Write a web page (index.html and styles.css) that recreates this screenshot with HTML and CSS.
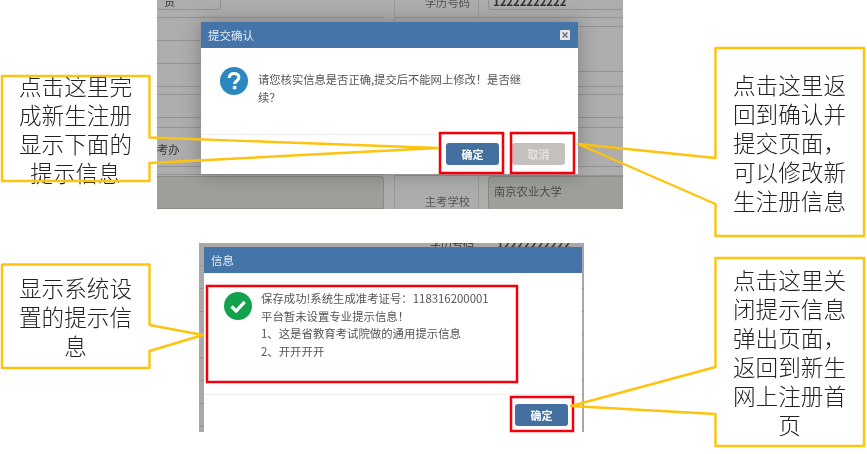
FILE: index.html
```html
<!DOCTYPE html>
<html lang="zh-CN">
<head>
<meta charset="utf-8">
<title>新生网上注册提示</title>
<link rel="stylesheet" href="styles.css">
</head>
<body>
<main class="canvas">

  <section class="shot shot-confirm">
    <div class="stack stack-left">
      <div class="row r18"><div class="field field-top-left">贡</div></div>
      <div class="row r23"></div>
      <div class="row r23"></div>
      <div class="row r23"></div>
      <div class="row r8"></div>
      <div class="row r23"></div>
      <div class="row r10"></div>
      <div class="row r39 office">考办</div>
      <div class="row r8"></div>
      <div class="field field-bottom-left"></div>
    </div>
    <div class="stack stack-right">
      <div class="row r18 split">
        <span class="label label-top">学历号码</span>
        <div class="field field-top-right">12222222222</div>
      </div>
      <div class="row r9"></div>
      <div class="row r45"></div>
      <div class="row r15"></div>
      <div class="row r8"></div>
      <div class="row r23"></div>
      <div class="row r10"></div>
      <div class="row r39"></div>
      <div class="row r9"></div>
      <div class="row-last split">
        <span class="label label-bottom">主考学校</span>
        <div class="field field-bottom-right">南京农业大学</div>
      </div>
    </div>

    <div class="dialog dialog-confirm">
      <header class="dialog-head">
        <span>提交确认</span>
        <span class="close">
          <svg viewBox="0 0 10 10" width="10" height="10"><path d="M2.5 2.5l5 5M7.5 2.5l-5 5" fill="none" stroke="#6f6f6f" stroke-width="1.5"/></svg>
        </span>
      </header>
      <div class="dialog-body body-confirm">
        <svg class="status" viewBox="0 0 28 28" width="28" height="28">
          <circle cx="14" cy="14" r="14" fill="#2a87c0"/>
          <path d="M9.2 10.8c.3-2.900 2.400-4.300 4.900-4.300 2.700 0 4.700 1.500 4.700 4 0 1.900-1.100 2.800-2.300 3.600-1.200.8-1.800 1.400-1.800 3" fill="none" stroke="#fff" stroke-width="3.200"/>
          <rect x="12.900" y="18.900" width="3.400" height="3.400" fill="#fff"/>
        </svg>
        <p class="message message-confirm">请您核实信息是否正确,提交后不能网上修改！是否继续？</p>
      </div>
      <footer class="dialog-foot foot-confirm">
        <button class="btn btn-primary" type="button">确定</button>
        <button class="btn btn-muted" type="button">取消</button>
      </footer>
    </div>
  </section>

  <section class="shot shot-info">
    <div class="cutoff"><span class="cut-label">学历号码</span><span class="cut-value">12222222222</span></div>
    <div class="dialog dialog-info">
      <header class="dialog-head">
        <span>信息</span>
      </header>
      <div class="dialog-body body-info">
        <svg class="status" viewBox="0 0 28 28" width="28" height="28">
          <circle cx="14" cy="14" r="14" fill="#12a24d"/>
          <path d="M7.500 14.500l4.700 4.500 8.500-9.200" fill="none" stroke="#fff" stroke-width="3.200"/>
        </svg>
        <div class="message message-info">
          <p>保存成功!系统生成准考证号：118316200001</p>
          <p>平台暂未设置专业提示信息！</p>
          <p>1、这是省教育考试院做的通用提示信息</p>
          <p>2、开开开开</p>
        </div>
      </div>
      <footer class="dialog-foot foot-info">
        <button class="btn btn-primary" type="button">确定</button>
      </footer>
    </div>
  </section>

  <div class="note note-a">点击这里完成新生注册显示下面的提示信息</div>
  <div class="note note-b">点击这里返回到确认并提交页面，可以修改新生注册信息</div>
  <div class="note note-c">显示系统设置的提示信息</div>
  <div class="note note-d">点击这里关闭提示信息弹出页面，返回到新生网上注册首页</div>

  <svg class="annotations" viewBox="0 0 867 454" width="867" height="454" aria-hidden="true">
    <g class="red-marks">
      <rect x="440" y="133" width="63" height="40"/>
      <rect x="511" y="133" width="63" height="40"/>
      <rect x="207" y="286" width="310" height="96"/>
      <rect x="511" y="397" width="62" height="34"/>
    </g>
    <g class="callouts">
      <path d="M2 76H149.500V137.500L438 148 149.500 163V181H2Z"/>
      <path d="M715.500 48H864V236H715.500V204L578 144 715.500 158Z"/>
      <path d="M2 264.500H149.500V325L203 335 149.500 351V368H2Z"/>
      <path d="M715.500 258H864V446H715.500V414L571 406 715.500 367Z"/>
    </g>
  </svg>
</main>
</body>
</html>
```

FILE: styles.css
```css
* { box-sizing: border-box; }

html, body { margin: 0; padding: 0; background: #fff; }

body { font-family: "Noto Sans CJK SC", "Noto Sans", sans-serif; }

.canvas {
  position: relative;
  width: 867px;
  height: 454px;
  overflow: hidden;
  background: #fff;
}

/* screenshots placed on the free canvas */
.shot {
  position: absolute;
  filter: blur(0.45px);
  font-size: 11.3px;
  color: #4a4a4a;
}

.shot-confirm {
  left: 157px;
  top: 0;
  width: 466px;
  height: 209px;
  display: grid;
  grid-template-columns: 237px 229px;
  background: #adadad;
  overflow: hidden;
}

.stack { display: flex; flex-direction: column; height: 209px; }
.stack-left { padding-right: 10px; }
.stack-right { border-left: 1px solid #999; }

.row { flex: none; border-bottom: 1px solid #939393; }
.r8 { height: 8px; }
.r9 { height: 9px; }
.r10 { height: 10px; }
.r15 { height: 15px; }
.r18 { height: 18px; }
.r23 { height: 23px; }
.r39 { height: 39px; }
.r45 { height: 45px; }

.split { display: grid; grid-template-columns: 84px 1fr; }
.row-last { flex: 1; }

.label {
  border-right: 1px solid #999;
  text-align: right;
  padding-right: 8px;
  color: #555;
  font-size: 11.3px;
}
.label-top { line-height: 0; padding-top: 2px; }
.label-bottom { padding-top: 16px; line-height: 18px; }

.field {
  border: 1px solid #939393;
  border-top: 0;
  border-radius: 0 0 4px 4px;
}
.field-top-left {
  width: 64px;
  height: 10px;
  padding-left: 7px;
  line-height: 2px;
  border-left: 0;
  color: #333;
  overflow: hidden;
}
.field-top-right {
  height: 10px;
  margin-left: 9px;
  padding-left: 4px;
  line-height: 2px;
  border-right: 0;
  font-weight: 700;
  color: #333;
  overflow: hidden;
}
.field-bottom-left {
  height: 33px;
  margin-top: 1px;
  border: 1px solid #8b8b86;
  border-left: 0;
  border-radius: 0 4px 0 0;
  background: #9f9f99;
}
.field-bottom-right {
  margin-left: 9px;
  border: 1px solid #8b8b86;
  border-right: 0;
  border-radius: 4px 0 0 0;
  background: #9f9f99;
  padding: 5px 0 0 5px;
  line-height: 18px;
}

.office {
  padding-top: 12px;
  line-height: 18px;
  font-size: 11.3px;
  color: #333;
}

/* dialogs */
.dialog {
  display: flex;
  flex-direction: column;
  background: #fff;
}

.dialog-confirm {
  position: absolute;
  left: 44px;
  top: 22px;
  width: 377px;
  height: 152px;
  box-shadow: 0 0 18px rgba(0, 0, 0, 0.28);
}

.dialog-head {
  flex: none;
  height: 26px;
  display: flex;
  align-items: center;
  justify-content: space-between;
  padding: 0 8px 0 7px;
  background: #4575a8;
  color: #e3eaf2;
  font-size: 11.5px;
}

.close {
  display: flex;
  width: 10px;
  height: 10px;
  background: #e6e6e6;
  border-radius: 1px;
}

.dialog-body { display: flex; align-items: flex-start; }
.body-confirm {
  height: 87px;
  padding: 19px 0 0 19px;
  gap: 10px;
  border-bottom: 1px solid #eee;
}
.status { flex: none; }

.message { margin: 0; color: #555; line-height: 17.600px; }
.message p { margin: 0; }
.message-confirm { width: 270px; padding-top: 4px; font-size: 11.3px; }

.dialog-foot { flex: 1; display: flex; justify-content: flex-end; }
.foot-confirm { gap: 13px; padding: 8px 13px 0 0; }

.btn {
  width: 53px;
  height: 22px;
  padding: 0;
  border: 0;
  border-radius: 3px;
  font: 700 11px "Noto Sans CJK SC", sans-serif;
  color: #fff;
}
.btn-primary { background: #44709f; }
.btn-muted { background: #c4c0be; color: #e4e2e0; }

.shot-info {
  left: 199px;
  top: 243px;
  width: 385px;
  height: 189px;
  display: flex;
  flex-direction: column;
  padding: 0 2px 0 5px;
  background: repeating-linear-gradient(#a9a9a9 0 22px, #949494 22px 23px);
}

.cutoff {
  flex: none;
  height: 4px;
  display: flex;
  line-height: 0;
  overflow: hidden;
  font-size: 11px;
  color: #333;
}
.cut-label { margin-left: 226px; }
.cut-value { margin-left: 23px; font-weight: 700; letter-spacing: 0.2px; }

.dialog-info { flex: 1; }

.body-info {
  height: 122px;
  padding: 19px 0 0 20px;
  gap: 9px;
  border-bottom: 1px solid #eee;
}
.message-info { font-size: 11.4px; padding-top: 0; margin-top: -2px; }

.foot-info { padding: 9px 14px 0 0; }

/* annotation callouts */
.note {
  position: absolute;
  width: 149px;
  display: flex;
  align-items: center;
  justify-content: center;
  padding: 0 17px;
  text-align: center;
  font-size: 22.600px;
  line-height: 29px;
  font-weight: 300;
  color: #222;
  filter: blur(0.3px);
}
.note-a { left: 1px; top: 76px; height: 105px; }
.note-b { left: 715px; top: 48px; height: 188px; }
.note-c { left: 1px; top: 264px; height: 104px; }
.note-d { left: 715px; top: 258px; height: 188px; }

.annotations {
  position: absolute;
  left: 0;
  top: 0;
  pointer-events: none;
}
.red-marks rect { fill: none; stroke: #f5000a; stroke-width: 2.500; }
.callouts path {
  fill: none;
  stroke: #fec30d;
  stroke-width: 2.400;
  stroke-linejoin: round;
}
```
